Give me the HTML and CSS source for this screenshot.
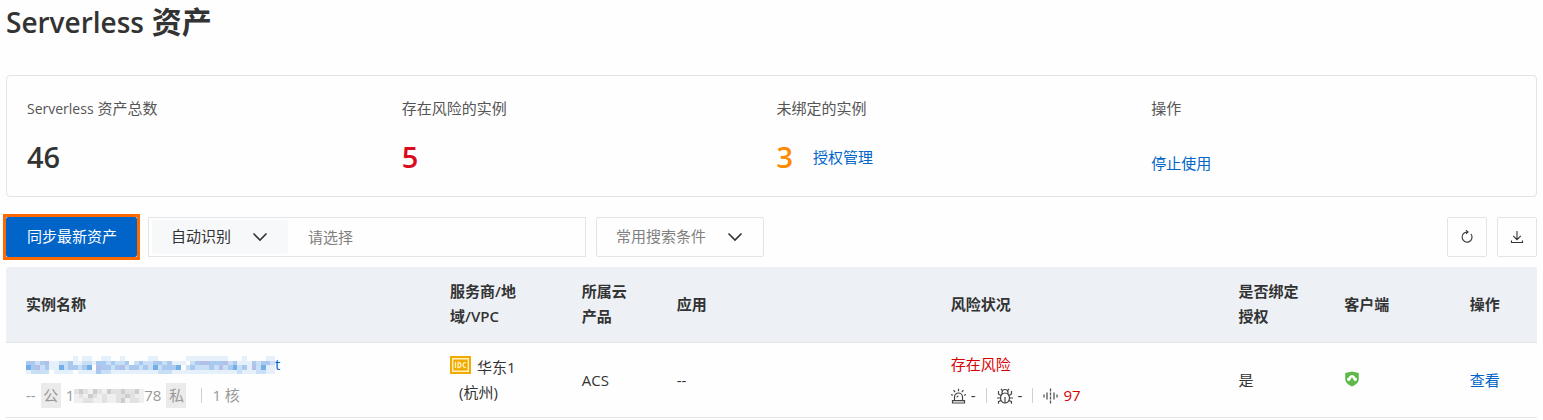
FILE: index.html
```html
<!DOCTYPE html>
<html lang="zh-CN">
<head>
<meta charset="utf-8">
<title>Serverless 资产</title>
<link rel="stylesheet" href="styles.css">
</head>
<body>
<main class="page">
  <h1 class="title"><span class="title-latin">Serverless</span> 资产</h1>

  <section class="summary">
    <div class="stat">
      <div class="stat-label"><span class="label-latin">Serverless</span> 资产总数</div>
      <div class="stat-value">46</div>
    </div>
    <div class="stat">
      <div class="stat-label">存在风险的实例</div>
      <div class="stat-value stat-danger">5</div>
    </div>
    <div class="stat">
      <div class="stat-label">未绑定的实例</div>
      <div class="stat-value stat-warning">3 <a class="link stat-link" href="#">授权管理</a></div>
    </div>
    <div class="stat">
      <div class="stat-label">操作</div>
      <div class="stat-action"><a class="link" href="#">停止使用</a></div>
    </div>
  </section>

  <div class="toolbar">
    <div class="highlight"><button class="sync" type="button">同步最新资产</button></div>
    <div class="search">
      <select class="select search-kind" aria-label="搜索方式"><option>自动识别</option></select>
      <input class="search-input" type="text" placeholder="请选择" aria-label="请选择">
    </div>
    <select class="select preset" aria-label="常用搜索条件"><option>常用搜索条件</option></select>
    <div class="tools">
      <button class="tool" type="button" aria-label="刷新">
        <svg width="14" height="14" viewBox="0 0 14 14" fill="none" stroke="#333" stroke-width="1.1"><path d="M7.500 2.100A5 5 0 1 0 11 4"/><path d="M6 .3l2 1.800-2 1.600"/></svg>
      </button>
      <button class="tool" type="button" aria-label="下载">
        <svg width="14" height="14" viewBox="0 0 14 14" fill="none" stroke="#333" stroke-width="1.1"><path d="M7 1v8.500M3.200 5.800L7 9.600l3.800-3.800M1.500 10.500v2h11v-2"/></svg>
      </button>
    </div>
  </div>

  <table class="assets">
    <colgroup>
      <col class="c-name"><col class="c-region"><col class="c-product"><col class="c-app"><col class="c-risk"><col class="c-bound"><col class="c-client"><col class="c-action">
    </colgroup>
    <thead>
      <tr><th>实例名称</th><th class="th-region">服务商/地域/VPC</th><th>所属云产品</th><th>应用</th><th>风险状况</th><th>是否绑定授权</th><th>客户端</th><th>操作</th></tr>
    </thead>
    <tbody>
      <tr>
        <td>
          <a class="link name" href="#"><svg class="mosaic" width="249" height="18" viewBox="0 0 53 4" preserveAspectRatio="none" shape-rendering="crispEdges" aria-hidden="true">
            <path stroke="#e6f0fa" d="M0 3.500h5M6 3.500h4M11 3.500h4M15 3.500h38M10 .5h1M12 .5h2M16 .5h2M20 .5h1M26 .5h2M34 .5h9M46 .5h1M51 .5h2M5 1.500h7M14 1.500h2M31 1.500h3M45 1.500h3M5 2.500h2M47 2.500h6"/>
            <path stroke="#c9dff5" d="M0 1.500h5M7 1.500h3M12 1.500h2M16 1.500h6M23 1.500h8M35 1.500h10M48 1.500h5M0 2.500h5M8 2.500h6M15 2.500h17M34 2.500h13M48 2.500h2M1 3.500h4M15 3.500h3M28 3.500h3M45 3.500h1M49 3.500h2"/>
            <path stroke="#a9c9ee" d="M0 1.500h2M3 1.500h1M9 1.500h1M15 1.500h2M18 1.500h1M21 1.500h1M24 1.500h1M27 1.500h2M30 1.500h1M36 1.500h6M44 1.500h1M48 1.500h1M50 1.500h2M1 2.500h2M4 2.500h1M9 2.500h2M12 2.500h1M16 2.500h2M19 2.500h1M22 2.500h2M25 2.500h1M29 2.500h3M35 2.500h1M39 2.500h1M43 2.500h1M46 2.500h1M15 3.500h1"/>
            <path stroke="#b4bfe8" d="M2 2.500h1M4 1.500h1M15 2.500h1M20 2.500h1M37 1.500h2M41 2.500h1M42 1.500h1M48 2.500h1"/>
            <path stroke="#72aee8" d="M0 2.500h1M7 2.500h1M13 2.500h1M27 2.500h1M32 2.500h1M44 2.500h1M50 2.500h1"/>
          </svg>t</a>
          <div class="meta"><span>--</span><span class="tag">公</span><span class="ip">1<svg class="mosaic" width="70" height="14" viewBox="0 0 15 3" preserveAspectRatio="none" shape-rendering="crispEdges" aria-hidden="true">
            <path stroke="#f0f0f0" d="M0 .5h15M0 1.500h15M0 2.500h15"/>
            <path stroke="#e2e2e2" d="M0 .5h3M5 .5h1M7 .5h2M9 .5h5M1 1.500h1M4 1.500h1M6 1.500h1M9 1.500h4M2 2.500h2M6 2.500h1M9 2.500h2M12 2.500h2"/>
            <path stroke="#cdcdcd" d="M1 .5h1M4 .5h1M7 .5h1M10 .5h1M13 .5h1M3 1.500h1M11 1.500h1M10 2.500h1"/>
          </svg>78</span><span class="tag">私</span><span class="cores">1 核</span></div>
        </td>
        <td>
          <div class="region"><svg width="21" height="18" viewBox="0 0 21 18" role="img" aria-label="IDC"><path fill="#f2aa00" d="M0 0h21v18H0z"/><path fill="none" stroke="#fff0bd" stroke-width="1.400" d="M2.700 2.700h15.600v12.600H2.700z"/><path fill="none" stroke="#fff0bd" stroke-width="1.300" d="M5.500 6v6M8 6.500v5h.8q2 0 2-2.500t-2-2.500H8M15.800 6.600h-.8q-2 0-2 2.400t2 2.400h.8"/></svg><span>华东1</span></div>
          <div class="city">(杭州)</div>
        </td>
        <td>ACS</td>
        <td>--</td>
        <td>
          <a class="risk-link" href="#">存在风险</a>
          <div class="risks">
            <span class="risk"><svg width="15" height="16" viewBox="0 0 15 16" fill="none" stroke="#444" stroke-width="1.200"><path d="M3.500 12.500V9a4 4 0 0 1 8 0v3.500M1.500 15v-2.300h12V15zM7.500 .8v2.400M2.600 2.200l1.500 1.800M12.400 2.200l-1.500 1.800M0 6.500l2 .8M15 6.500l-2 .8M6 9.500q0-1.500 1.500-1.500"/></svg>-</span>
            <span class="risk"><svg width="16" height="16" viewBox="0 0 16 16" fill="none" stroke="#444" stroke-width="1.200"><path d="M3.500 10a4.500 5 0 0 1 9 0 4.500 5 0 0 1-9 0zM5 6V4.500a3 3 0 0 1 6 0V6M5.500 2.800L4 .8M10.500 2.800l1.500-2M8 9v6M4 7.500L1.500 6V3M12 7.500L14.500 6V3M0 10h3.500M12.500 10H16M4 12.500l-2.500 1.200v2M12 12.500l2.500 1.200v2"/></svg>-</span>
            <span class="risk"><svg width="15" height="16" viewBox="0 0 15 16" fill="none" stroke="#555" stroke-width="1.300"><path d="M1 6.500v3M4 4.500v7M11 4.500v7M14 6.500v3"/><path stroke-dasharray="3 1" d="M7.500 .5v15"/></svg><a class="risk-link" href="#">97</a></span>
          </div>
        </td>
        <td>是</td>
        <td><svg class="shield" width="16" height="16" viewBox="0 0 16 16" role="img" aria-label="在线"><path fill="#60b84a" d="M8 .5l6.800 1.500V8q0 5-6.800 7.500Q1.200 13 1.200 8V2z"/><path fill="#fff" d="M4.700 10Q3 9.800 3 8.200 3 6.700 4.700 6.500 5.200 4 8 4t3.300 2.500Q13 6.700 13 8.200T11.300 10h-.8L8 6.300 5.500 10z"/></svg></td>
        <td><a class="link" href="#">查看</a></td>
      </tr>
    </tbody>
  </table>
</main>
</body>
</html>
```
FILE: styles.css
```css
* { box-sizing: border-box; }
body {
  margin: 0;
  background: #fefefe;
  color: #333;
  font: 15px/25px "Open Sans", "Noto Sans CJK SC", sans-serif;
}
button, input, select { font: inherit; color: inherit; }
svg { display: block; flex: none; }
a { text-decoration: none; }
.page { padding: 0 6px; }
.title { margin: 0; font-size: 30px; line-height: 44px; font-weight: 700; }
.title-latin { font-size: 28px; font-weight: 600; }
.label-latin { font-size: 14px; }
.link { color: #0064c8; }
.summary {
  display: grid;
  grid-template-columns: repeat(4, 1fr);
  margin-top: 31px;
  padding: 20px 10px 20px 20px;
  border: 1px solid #e3e4e6;
  border-radius: 4px;
}
.stat-label { color: #555; }
.stat-value { display: flex; align-items: center; gap: 20px; margin-top: 19px; font-size: 29px; line-height: 34px; font-weight: 600; }
.stat-danger { color: #d90b1c; }
.stat-warning { color: #ff8a00; }
.stat-link { font-size: 15px; font-weight: 400; }
.stat-action { margin-top: 30px; }
.toolbar { display: flex; margin-top: 20px; }
.highlight { outline: 3px solid #ff6a00; }
.sync { display: block; height: 40px; padding: 0 20px 2px 21px; border: 0; border-radius: 2px; background: #0064c8; color: #fff; }
.search { display: flex; width: 438px; height: 40px; margin-left: 11px; padding: 2px 3px; border: 1px solid #e3e4e6; }
.select {
  appearance: none;
  border: 0;
  padding: 0 19px 1px;
  background: url("data:image/svg+xml,%3Csvg xmlns='http://www.w3.org/2000/svg' width='16' height='10' fill='none' stroke='%23333' stroke-width='1.600'%3E%3Cpath d='M1.500 1.500L8 8l6.500-6.500'/%3E%3C/svg%3E") no-repeat right 20px center;
}
.search-kind { width: 136px; background-color: #f7f8fa; border-radius: 4px; }
.search-input { flex: 1; min-width: 0; padding: 0 20px; border: 0; background: none; }
.search-input::placeholder { color: #808080; opacity: 1; }
.preset { width: 168px; height: 40px; margin-left: 10px; border: 1px solid #e3e4e6; border-radius: 2px; color: #808080; }
.tools { display: flex; gap: 10px; margin-left: auto; }
.tool { display: grid; place-items: center; width: 40px; height: 40px; padding: 0; border: 1px solid #e3e4e6; border-radius: 2px; background: none; }
.assets { width: 100%; margin-top: 10px; border-collapse: separate; border-spacing: 0; table-layout: fixed; }
.assets th { padding: 12px 20px 13px; border-bottom: 1px solid #e3e4e6; background: #edf1f6; font-weight: 600; text-align: left; vertical-align: middle; }
.assets td { padding: 9px 0 9px 20px; border-bottom: 1px solid #e3e4e6; vertical-align: middle; }
.assets th:first-child { border-top-left-radius: 2px; }
.assets th:last-child { border-top-right-radius: 2px; }
.assets .th-region { padding-right: 40px; }
.c-name { width: 27.700%; }
.c-region { width: 8.600%; }
.c-product { width: 6.200%; }
.c-app { width: 17.900%; }
.c-risk { width: 18.800%; }
.c-bound { width: 6.900%; }
.c-client { width: 8.200%; }
.c-action { width: 5.700%; }
.name { display: flex; align-items: center; }
.mosaic { fill: none; stroke-width: 1; }
.meta { display: flex; align-items: center; margin-top: 6px; color: #999; }
.tag { width: 20px; margin: 0 5px; background: #ebebeb; text-align: center; }
.ip { display: flex; align-items: center; }
.cores { display: flex; align-items: center; }
.cores::before { content: ""; width: 1px; height: 15px; margin: 0 10px; background: #d0d0d0; }
.region { display: flex; align-items: center; gap: 6px; }
.region svg { margin-bottom: 6px; }
.city { padding-left: 9px; }
.risk-link { color: #d80000; }
.risks { display: flex; margin-top: 6px; }
.risk { display: flex; align-items: center; gap: 5px; }
.risk + .risk::before { content: ""; width: 1px; height: 15px; margin: 0 5px 0 10px; background: #d0d0d0; }
.shield { margin-bottom: 2px; }
```
